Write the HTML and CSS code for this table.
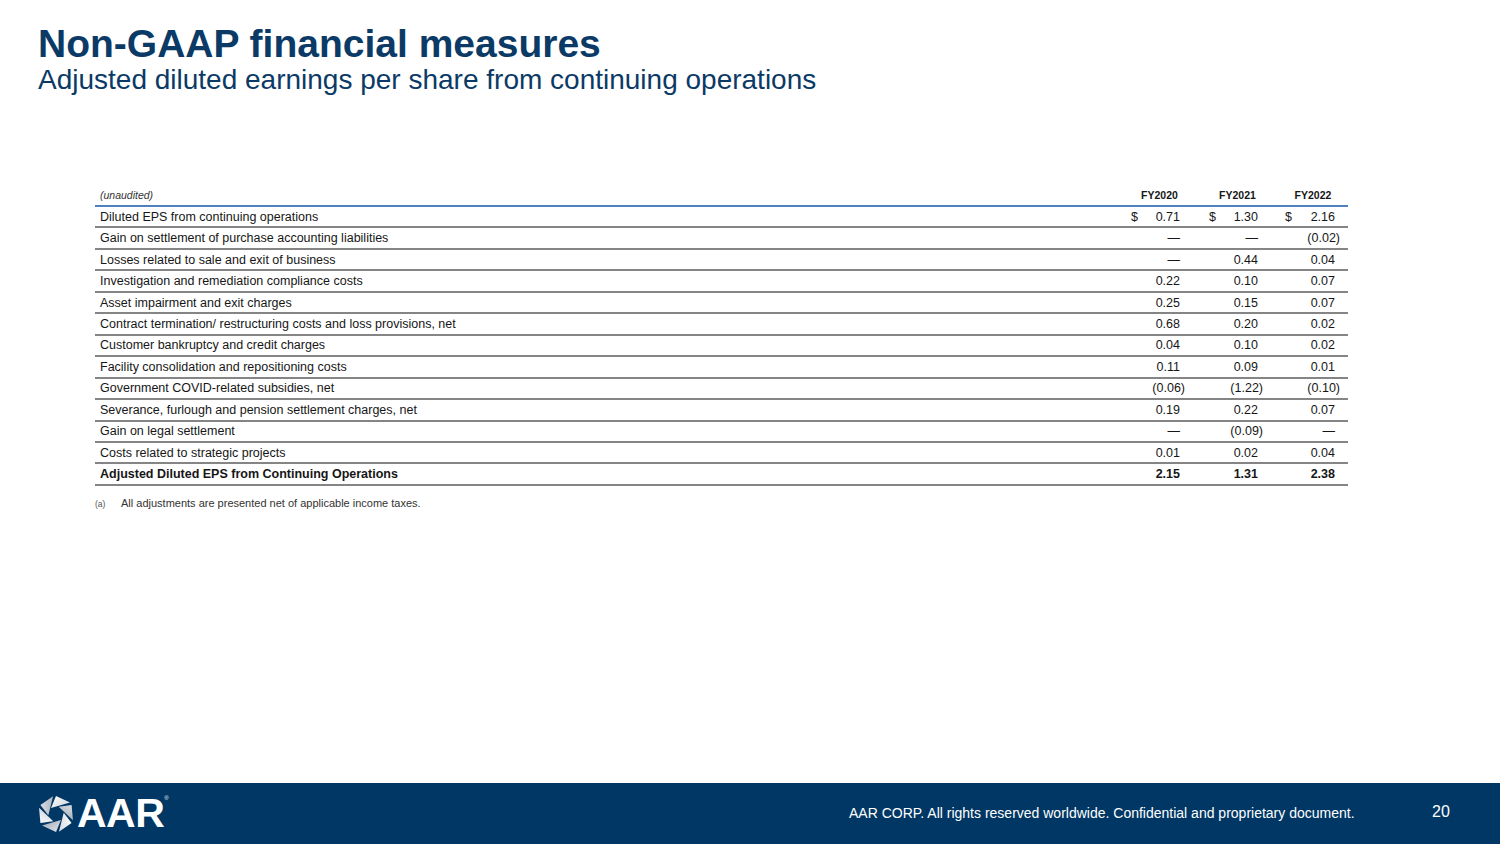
FILE: index.html
```html
<!DOCTYPE html>
<html lang="en">
<head>
<meta charset="utf-8">
<title>Non-GAAP financial measures</title>
<link rel="stylesheet" href="styles.css">
</head>
<body>
<div class="slide">
  <header class="head">
    <h1 class="title">Non-GAAP financial measures</h1>
    <h2 class="subtitle">Adjusted diluted earnings per share from continuing operations</h2>
  </header>
  <main class="content">
    <table class="eps">
      <colgroup>
        <col class="c-label"><col class="c-y1"><col class="c-y2"><col class="c-y3">
      </colgroup>
      <thead>
        <tr>
          <th class="lbl"><i>(unaudited)</i></th>
          <th class="yr y1">FY2020</th>
          <th class="yr y2">FY2021</th>
          <th class="yr y3">FY2022</th>
        </tr>
      </thead>
      <tbody>
        <tr><td class="lbl">Diluted EPS from continuing operations</td>
          <td class="num y1"><div class="money"><span class="cur">$</span><span>0.71</span></div></td>
          <td class="num y2"><div class="money"><span class="cur">$</span><span>1.30</span></div></td>
          <td class="num y3"><div class="money"><span class="cur">$</span><span>2.16</span></div></td></tr>
        <tr><td class="lbl">Gain on settlement of purchase accounting liabilities</td>
          <td class="num y1">—</td><td class="num y2">—</td><td class="num y3"><span class="neg">(0.02)</span></td></tr>
        <tr><td class="lbl">Losses related to sale and exit of business</td>
          <td class="num y1">—</td><td class="num y2">0.44</td><td class="num y3">0.04</td></tr>
        <tr><td class="lbl">Investigation and remediation compliance costs</td>
          <td class="num y1">0.22</td><td class="num y2">0.10</td><td class="num y3">0.07</td></tr>
        <tr><td class="lbl">Asset impairment and exit charges</td>
          <td class="num y1">0.25</td><td class="num y2">0.15</td><td class="num y3">0.07</td></tr>
        <tr><td class="lbl">Contract termination/ restructuring costs and loss provisions, net</td>
          <td class="num y1">0.68</td><td class="num y2">0.20</td><td class="num y3">0.02</td></tr>
        <tr><td class="lbl">Customer bankruptcy and credit charges</td>
          <td class="num y1">0.04</td><td class="num y2">0.10</td><td class="num y3">0.02</td></tr>
        <tr><td class="lbl">Facility consolidation and repositioning costs</td>
          <td class="num y1">0.11</td><td class="num y2">0.09</td><td class="num y3">0.01</td></tr>
        <tr><td class="lbl">Government COVID-related subsidies, net</td>
          <td class="num y1"><span class="neg">(0.06)</span></td><td class="num y2"><span class="neg">(1.22)</span></td><td class="num y3"><span class="neg">(0.10)</span></td></tr>
        <tr><td class="lbl">Severance, furlough and pension settlement charges, net</td>
          <td class="num y1">0.19</td><td class="num y2">0.22</td><td class="num y3">0.07</td></tr>
        <tr><td class="lbl">Gain on legal settlement</td>
          <td class="num y1">—</td><td class="num y2"><span class="neg">(0.09)</span></td><td class="num y3">—</td></tr>
        <tr><td class="lbl">Costs related to strategic projects</td>
          <td class="num y1">0.01</td><td class="num y2">0.02</td><td class="num y3">0.04</td></tr>
        <tr class="total"><td class="lbl">Adjusted Diluted EPS from Continuing Operations</td>
          <td class="num y1">2.15</td><td class="num y2">1.31</td><td class="num y3">2.38</td></tr>
      </tbody>
    </table>
    <p class="note"><span class="mark">(a)</span><span>All adjustments are presented net of applicable income taxes.</span></p>
  </main>
  <footer class="footer">
    <div class="brand">
      <svg class="wheel" width="36" height="36" viewBox="-18 -18 36 36" aria-hidden="true">
        <defs>
          <linearGradient id="gw" x1="0" y1="0" x2="1" y2="1">
            <stop offset="0" stop-color="#ffffff"/>
            <stop offset="1" stop-color="#cdd2da"/>
          </linearGradient>
          <linearGradient id="gg" x1="0" y1="0" x2="1" y2="1">
            <stop offset="0" stop-color="#e4e7ec"/>
            <stop offset="1" stop-color="#9ca5b2"/>
          </linearGradient>
        </defs>
        <g>
          <polygon points="-5,-6 0,-18 14,-11.5" fill="url(#gw)" transform="rotate(0)"/>
          <polygon points="-5,-6 0,-18 14,-11.5" fill="url(#gg)" transform="rotate(60)"/>
          <polygon points="-5,-6 0,-18 14,-11.5" fill="url(#gw)" transform="rotate(120)"/>
          <polygon points="-5,-6 0,-18 14,-11.5" fill="url(#gg)" transform="rotate(180)"/>
          <polygon points="-5,-6 0,-18 14,-11.5" fill="url(#gw)" transform="rotate(240)"/>
          <polygon points="-5,-6 0,-18 14,-11.5" fill="url(#gg)" transform="rotate(300)"/>
        </g>
      </svg>
      <span class="wordmark">AAR</span><span class="reg">®</span>
    </div>
    <p class="legal">AAR CORP. All rights reserved worldwide. Confidential and proprietary document.</p>
    <span class="page">20</span>
  </footer>
</div>
</body>
</html>
```

FILE: styles.css
```css
* { box-sizing: border-box; }
html, body { margin: 0; padding: 0; }
body {
  width: 1500px;
  height: 844px;
  overflow: hidden;
  background: #ffffff;
  font-family: "Liberation Sans", Arial, sans-serif;
}
.slide {
  width: 1500px;
  height: 844px;
  display: flex;
  flex-direction: column;
}
.head {
  padding: 23px 0 0 38px;
}
.title {
  margin: 0;
  font-size: 39px;
  line-height: 42px;
  font-weight: 700;
  color: #0b3a66;
}
.subtitle {
  margin: 0;
  font-size: 28px;
  line-height: 30px;
  font-weight: 400;
  color: #0b3a66;
}
.content {
  flex: 1;
  padding: 90px 0 0 95px;
}
.eps {
  width: 1253px;
  border-collapse: collapse;
  table-layout: fixed;
  font-size: 12.5px;
  color: #161616;
}
.c-label { width: auto; }
.c-y1 { width: 78px; }
.c-y2 { width: 78px; }
.c-y3 { width: 70px; }
.eps th, .eps td {
  padding: 0;
  height: 21.46px;
  border-bottom: 2px solid #858585;
  white-space: nowrap;
  vertical-align: middle;
}
.eps thead th {
  height: 21px;
  border-bottom: 2px solid #4f81bd;
  font-size: 10.5px;
  font-weight: 700;
}
.eps th.lbl {
  text-align: left;
  font-weight: 400;
  color: #333;
  padding-left: 5px;
}
.eps td.lbl {
  text-align: left;
  padding-left: 5px;
}
.eps th.yr { text-align: center; }
.eps th.y1 { padding-right: 3px; }
.eps th.y2 { padding-right: 3px; }
.eps td.num { text-align: right; }
.eps td.y1 { padding-right: 20px; }
.eps td.y2 { padding-right: 20px; }
.eps td.y3 { padding-right: 13px; }
.money {
  display: flex;
  justify-content: space-between;
}
.eps td.y1 .money { padding-left: 9px; }
.eps td.y2 .money { padding-left: 9px; }
.eps td.y3 .money { padding-left: 7px; }
.neg { margin-right: -5px; }
.total td { font-weight: 700; }
.note {
  margin: 11px 0 0 0;
  display: flex;
  align-items: baseline;
  font-size: 11px;
  color: #333;
}
.note .mark {
  width: 26px;
  font-size: 8.5px;
  color: #555;
}
.footer {
  height: 61px;
  background: #003764;
  display: flex;
  align-items: center;
  color: #ffffff;
  padding: 0 0 0 38px;
}
.brand {
  display: flex;
  align-items: center;
  width: 811px;
}
.wheel { display: block; margin-right: 3px; }
.wordmark {
  font-size: 41px;
  font-weight: 700;
  letter-spacing: -0.5px;
  line-height: 1;
}
.reg {
  font-size: 6px;
  align-self: flex-start;
  margin-top: 2px;
}
.legal {
  margin: 0;
  font-size: 14px;
  width: 583px;
  padding-bottom: 2px;
}
.page {
  font-size: 16px;
  padding-bottom: 4px;
}
```
